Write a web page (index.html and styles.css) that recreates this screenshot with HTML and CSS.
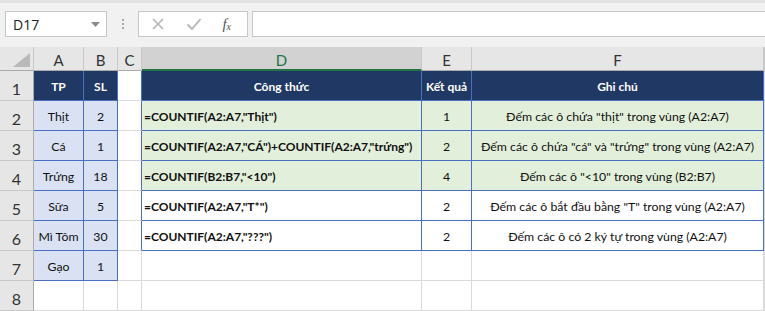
FILE: index.html
```html
<!DOCTYPE html>
<html lang="vi">
<head>
  <meta charset="UTF-8">
  <title>COUNTIF</title>
  <link rel="stylesheet" href="styles.css">
</head>
<body>
  <div class="toolbar">
    <div class="namebox">
      <span>D17</span>
      <svg width="9" height="5" viewBox="0 0 9 5"><path d="M0 0h9L4.5 5z" fill="#8a8a8a"/></svg>
    </div>
    <div class="grip"><i></i><i></i><i></i></div>
    <div class="fbuttons">
      <svg width="14" height="14" viewBox="0 0 14 14"><path d="M2 2l10 10M12 2L2 12" stroke="#b4b4b4" stroke-width="1.6" fill="none"/></svg>
      <svg width="16" height="14" viewBox="0 0 16 14"><path d="M1.5 7.5l4.5 4.5L14.5 2" stroke="#b4b4b4" stroke-width="1.8" fill="none"/></svg>
      <span class="fx">f<sub>x</sub></span>
    </div>
    <div class="fbar"></div>
  </div>

  <div class="sheet">
    <div class="c hd corner"><svg width="17" height="14" viewBox="0 0 17 14"><path d="M17 0v14H0z" fill="#b9b9b9"/></svg></div>
    <div class="c hd">A</div>
    <div class="c hd">B</div>
    <div class="c hd">C</div>
    <div class="c hd sel">D</div>
    <div class="c hd">E</div>
    <div class="c hd">F</div>
    <div class="c hd"></div>

    <div class="c rn">1</div>
    <div class="c t th">TP</div>
    <div class="c t th">SL</div>
    <div class="c edge"></div>
    <div class="c t th">Công thức</div>
    <div class="c t th">Kết quả</div>
    <div class="c t th">Ghi chú</div>
    <div class="c"></div>

    <div class="c rn">2</div>
    <div class="c t lb">Thịt</div>
    <div class="c t lb">2</div>
    <div class="c edge"></div>
    <div class="c t gr f">=COUNTIF(A2:A7,"Thịt")</div>
    <div class="c t gr">1</div>
    <div class="c t gr">Đếm các ô chứa "thịt" trong vùng (A2:A7)</div>
    <div class="c"></div>

    <div class="c rn">3</div>
    <div class="c t lb">Cá</div>
    <div class="c t lb">1</div>
    <div class="c edge"></div>
    <div class="c t gr f">=COUNTIF(A2:A7,"CÁ")+COUNTIF(A2:A7,"trứng")</div>
    <div class="c t gr">2</div>
    <div class="c t gr">Đếm các ô chứa "cá" và "trứng" trong vùng (A2:A7)</div>
    <div class="c"></div>

    <div class="c rn">4</div>
    <div class="c t lb">Trứng</div>
    <div class="c t lb">18</div>
    <div class="c edge"></div>
    <div class="c t gr f">=COUNTIF(B2:B7,"&lt;10")</div>
    <div class="c t gr">4</div>
    <div class="c t gr">Đếm các ô "&lt;10" trong vùng (B2:B7)</div>
    <div class="c"></div>

    <div class="c rn">5</div>
    <div class="c t lb">Sữa</div>
    <div class="c t lb">5</div>
    <div class="c edge"></div>
    <div class="c t f">=COUNTIF(A2:A7,"T*")</div>
    <div class="c t">2</div>
    <div class="c t">Đếm các ô bắt đầu bằng "T" trong vùng (A2:A7)</div>
    <div class="c"></div>

    <div class="c rn">6</div>
    <div class="c t lb">Mì Tôm</div>
    <div class="c t lb">30</div>
    <div class="c edge"></div>
    <div class="c t f">=COUNTIF(A2:A7,"???")</div>
    <div class="c t">2</div>
    <div class="c t">Đếm các ô có 2 ký tự trong vùng (A2:A7)</div>
    <div class="c"></div>

    <div class="c rn">7</div>
    <div class="c t lb">Gạo</div>
    <div class="c t lb">1</div>
    <div class="c"></div>
    <div class="c"></div>
    <div class="c"></div>
    <div class="c"></div>
    <div class="c"></div>

    <div class="c rn">8</div>
    <div class="c"></div>
    <div class="c"></div>
    <div class="c"></div>
    <div class="c"></div>
    <div class="c"></div>
    <div class="c"></div>
    <div class="c"></div>
  </div>
</body>
</html>
```

FILE: styles.css
```css
body {
  margin: 0;
  font-family: Lato, 'Noto Sans', sans-serif;
  background-color: #fff;
  overflow: hidden;
}

.toolbar {
  height: 47px;
  box-sizing: border-box;
  border-top: 3px solid #e3e3e3;
  background-color: #f1f1f1;
  display: flex;
  align-items: flex-start;
  padding: 8px 0 0 5px;
}

.namebox {
  width: 102px;
  height: 26px;
  box-sizing: border-box;
  background: #fff;
  border: 1px solid #c6c6c6;
  display: flex;
  align-items: center;
  justify-content: space-between;
  padding: 0 6px 0 7px;
  font-family: 'Open Sans', sans-serif;
  font-size: 14px;
  color: #222;
}

.grip {
  width: 31px;
  height: 26px;
  display: flex;
  flex-direction: column;
  align-items: center;
  justify-content: center;
  gap: 2px;
}

.grip i {
  width: 2px;
  height: 2px;
  background: #a8a8a8;
}

.fbuttons {
  width: 110px;
  height: 26px;
  box-sizing: border-box;
  background: #fff;
  border: 1px solid #c6c6c6;
  display: flex;
  align-items: center;
  justify-content: space-between;
  padding: 0 16px 0 12px;
}

.fx {
  font-family: 'Liberation Serif', serif;
  font-style: italic;
  font-size: 15px;
  color: #555;
}

.fx sub {
  font-size: 10px;
  vertical-align: -1px;
}

.fbar {
  flex: 1;
  height: 26px;
  margin-left: 4px;
  margin-right: -2px;
  box-sizing: border-box;
  background: #fff;
  border: 1px solid #c6c6c6;
}

.sheet {
  display: grid;
  grid-template-columns: 34px 50px 34px 24px 280px 50px 292px 1fr;
  grid-template-rows: 24px repeat(8, 30px);
}

.c {
  box-sizing: border-box;
  border-right: 1px solid #dadada;
  border-bottom: 1px solid #dadada;
  display: flex;
  align-items: center;
  justify-content: center;
  padding-top: 2px;
  font-size: 12.3px;
  color: #111;
  white-space: nowrap;
  overflow: hidden;
}

.hd {
  background-color: #e6e6e6;
  border-color: #c8c8c8;
  border-bottom-color: #ababab;
  font-size: 15px;
  color: #333;
  padding-top: 3px;
}

.hd.corner {
  align-items: flex-end;
  justify-content: flex-end;
  padding: 0 3px 3px 0;
}

.hd.sel {
  background-color: #d2d2d2;
  border-bottom: 2px solid #217346;
  color: #217346;
}

.rn {
  background-color: #e6e6e6;
  border-color: #c8c8c8;
  border-right-color: #ababab;
  font-size: 16px;
  color: #333;
  padding-top: 6px;
}

.t {
  border-color: #4a6fc0;
}

.th {
  background-color: #1f3864;
  color: #fff;
  font-weight: bold;
  font-size: 12px;
}

.lb {
  background-color: #d9e1f2;
}

.gr {
  background-color: #e2efda;
}

.f {
  justify-content: flex-start;
  padding-left: 2px;
  font-weight: bold;
  font-size: 12px;
}

.edge {
  border-right-color: #4a6fc0;
}
```
